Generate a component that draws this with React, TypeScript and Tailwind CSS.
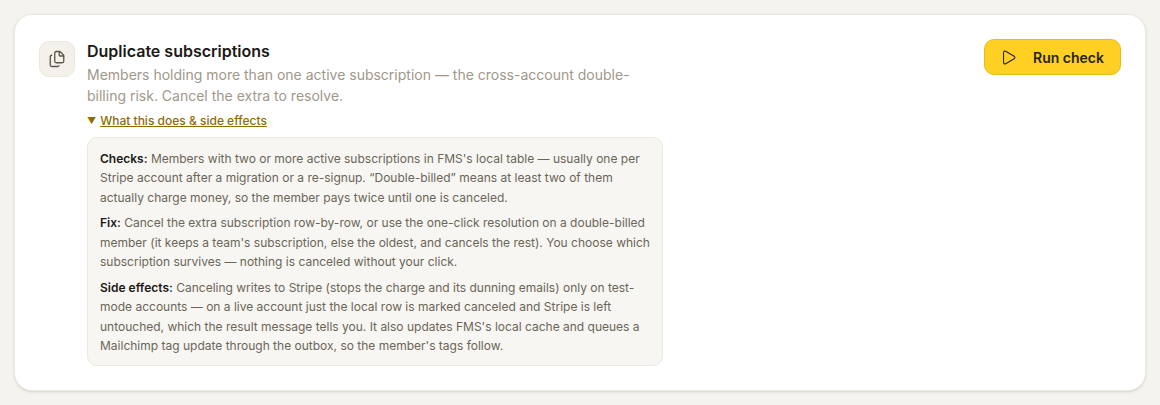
import { Files, Play } from "lucide-react";

export default function App() {
  return (
    <div className="h-[405px] bg-[#f5f3ee] px-[14px] pt-[14px] font-['Inter',sans-serif]">
      <div className="flex items-start justify-between rounded-[18px] border border-[#ebe8df] bg-white p-6 shadow-sm">
        <div className="flex gap-3">
          <div className="mt-0.5 flex h-9 w-9 shrink-0 items-center justify-center rounded-[10px] border border-[#ebe8df] bg-[#f4f1ea] text-[#5c564b]">
            <Files size={18} strokeWidth={1.75} />
          </div>
          <div className="w-[576px]">
            <h3 className="text-[16px] font-semibold leading-[24px] text-[#1c1917]">Duplicate subscriptions</h3>
            <p className="mt-[1px] w-[560px] text-[14px] leading-[21px] text-[#a0988a]">
              Members holding more than one active subscription — the cross-account double-billing risk. Cancel the extra to resolve.
            </p>
            <div className="mt-[6px] flex items-center gap-[4px] text-[12px] font-medium leading-[18px] text-[#8f6b00]">
              <span className="text-[9px]">▼</span>
              <span className="underline">What this does &amp; side effects</span>
            </div>
            <div className="mt-[7px] space-y-[6px] rounded-[10px] border border-[#ebe8df] bg-[#f7f6f2] px-3 pb-[9.5px] pt-[10.5px] text-[12px] leading-[19.5px] text-[#6b6558]">
              <p>
                <strong className="font-semibold text-[#1c1917]">Checks:</strong> Members with two or more active subscriptions in FMS's local table — usually one per Stripe account after a migration or a re-signup. “Double-billed” means at least two of them actually charge money, so the member pays twice until one is canceled.
              </p>
              <p>
                <strong className="font-semibold text-[#1c1917]">Fix:</strong> Cancel the extra subscription row-by-row, or use the one-click resolution on a double-billed member (it keeps a team's subscription, else the oldest, and cancels the rest). You choose which subscription survives — nothing is canceled without your click.
              </p>
              <p>
                <strong className="font-semibold text-[#1c1917]">Side effects:</strong> Canceling writes to Stripe (stops the charge and its dunning emails) only on test-mode accounts — on a live account just the local row is marked canceled and Stripe is left untouched, which the result message tells you. It also updates FMS's local cache and queues a Mailchimp tag update through the outbox, so the member's tags follow.
              </p>
            </div>
          </div>
        </div>
        <button className="flex h-9 w-[137px] items-center gap-4 rounded-[10px] border border-[#ecb91a] bg-[#fdd023] pl-[15px] text-[14px] font-semibold text-[#292218]">
          <Play size={17} strokeWidth={1.5} />
          Run check
        </button>
      </div>
    </div>
  );
}
